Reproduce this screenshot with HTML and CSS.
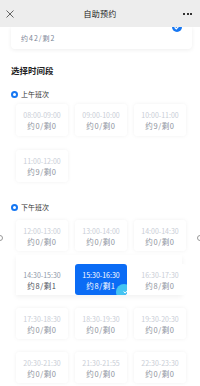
FILE: index.html
```html
<!DOCTYPE html>
<html lang="zh-CN">
<head>
<meta charset="utf-8">
<title>自助预约</title>
<link rel="stylesheet" href="styles.css">
</head>
<body>
<header class="nav">
  <svg class="nav-close" width="8" height="8" viewBox="0 0 8 8"><path d="M0.5 0.5L7.5 7.5M7.5 0.5L0.5 7.5" stroke="#555" stroke-width="0.9" fill="none"/></svg>
  <div class="nav-title">自助预约</div>
  <div class="nav-more"><i></i><i></i><i></i></div>
</header>

<main class="page">
  <div class="top-card">
    <span class="top-count">约42/剩2</span>
    <span class="top-check">
      <svg width="10" height="10" viewBox="0 0 10 10"><circle cx="5" cy="5" r="5" fill="#1677f2"/><path d="M2.6 5.2L4.3 6.8L7.4 3.6" stroke="#fff" stroke-width="1.2" fill="none"/></svg>
    </span>
  </div>

  <h2 class="section-title">选择时间段</h2>

  <div class="group-label"><span class="radio"></span>上午班次</div>
  <div class="grid morning">
    <div class="slot"><div class="time">08:00-09:00</div><div class="count">约0/剩0</div></div>
    <div class="slot"><div class="time">09:00-10:00</div><div class="count">约0/剩0</div></div>
    <div class="slot"><div class="time">10:00-11:00</div><div class="count">约9/剩0</div></div>
    <div class="slot"><div class="time">11:00-12:00</div><div class="count">约9/剩0</div></div>
  </div>

  <div class="group-label afternoon-label"><span class="radio"></span>下午班次</div>
  <div class="afternoon">
    <span class="edge edge-left"></span>
    <span class="edge edge-right"></span>
    <div class="grid">
      <div class="slot"><div class="time">12:00-13:00</div><div class="count">约0/剩0</div></div>
      <div class="slot"><div class="time">13:00-14:00</div><div class="count">约0/剩0</div></div>
      <div class="slot"><div class="time">14:00-14:30</div><div class="count">约0/剩0</div></div>
    </div>
    <div class="grid lifted">
      <div class="slot open"><div class="time">14:30-15:30</div><div class="count">约8/剩1</div></div>
      <div class="slot selected"><div class="time">15:30-16:30</div><div class="count">约8/剩1</div>
        <span class="corner"><svg width="6" height="5" viewBox="0 0 6 5"><path d="M0.6 2.6L2.2 4L5.4 0.8" stroke="#fff" stroke-width="1" fill="none"/></svg></span>
      </div>
      <div class="slot"><div class="time">16:30-17:30</div><div class="count">约8/剩0</div></div>
    </div>
    <div class="grid">
      <div class="slot"><div class="time">17:30-18:30</div><div class="count">约0/剩0</div></div>
      <div class="slot"><div class="time">18:30-19:30</div><div class="count">约0/剩0</div></div>
      <div class="slot"><div class="time">19:30-20:30</div><div class="count">约0/剩0</div></div>
    </div>
    <div class="grid">
      <div class="slot"><div class="time">20:30-21:30</div><div class="count">约0/剩0</div></div>
      <div class="slot"><div class="time">21:30-21:55</div><div class="count">约0/剩0</div></div>
      <div class="slot"><div class="time">22:30-23:30</div><div class="count">约0/剩0</div></div>
    </div>
  </div>
</main>
</body>
</html>
```

FILE: styles.css
```css
* { box-sizing: border-box; }
html, body { margin: 0; padding: 0; }
body {
  width: 200px;
  height: 386px;
  overflow: hidden;
  background: #fff;
  font-family: "Noto Sans CJK SC", "Noto Sans", sans-serif;
  color: #333;
}

.nav {
  position: relative;
  z-index: 2;
  height: 27px;
  background: #ededed;
  display: flex;
  align-items: center;
  justify-content: space-between;
  padding: 0 8px 0 6px;
}
.nav-close { display: block; margin-top: 1px; }
.nav-title {
  position: absolute;
  left: 0; right: 0; top: 0;
  text-align: center;
  line-height: 27px;
  font-size: 8px;
  color: #222;
  letter-spacing: 0.2px;
  pointer-events: none;
}
.nav-more { display: flex; gap: 1.3px; margin-top: 1px; }
.nav-more i { width: 2px; height: 2px; background: #333; display: block; }

.page { padding: 0; }

.top-card {
  position: relative;
  margin: 0 8px 0 11px;
  height: 22px;
  background: #fff;
  border-radius: 0 0 4px 4px;
  box-shadow: 0 1px 4px rgba(0, 0, 0, 0.07);
  display: flex;
  align-items: center;
  padding: 0 0 1px 10px;
}
.top-count {
  font-size: 7px;
  color: #7b8496;
  letter-spacing: 1px;
}
.top-check {
  position: absolute;
  right: 10px;
  top: -5px;
  display: block;
  line-height: 0;
}

.section-title {
  margin: 15px 0 0 11px;
  font-size: 8.5px;
  line-height: 12px;
  font-weight: 700;
  color: #222;
}

.group-label {
  display: flex;
  align-items: center;
  margin: 13px 0 0 11px;
  font-size: 7px;
  line-height: 10px;
  color: #333;
}
.radio {
  width: 7px;
  height: 7px;
  border: 2px solid #1677f2;
  border-radius: 50%;
  margin-right: 3px;
}

.grid {
  display: grid;
  grid-template-columns: repeat(3, 52px);
  column-gap: 7px;
  row-gap: 14px;
  padding-left: 16px;
  margin-top: 5px;
}

.slot {
  position: relative;
  height: 32px;
  background: #fff;
  border-radius: 3px;
  box-shadow: 0 0 4px rgba(0, 0, 0, 0.06);
  text-align: center;
  padding-top: 6px;
  overflow: hidden;
}
.time {
  font-size: 7px;
  line-height: 10px;
  color: #c9cdd6;
}
.count {
  font-size: 7.5px;
  line-height: 11px;
  color: #8e939d;
  letter-spacing: 0.6px;
}
.slot.open .time { color: #8f98a8; }
.slot.open .count { color: #4a4f58; }
.slot.selected { background: #0b6cf5; box-shadow: none; }
.slot.selected .time,
.slot.selected .count { color: #fff; }
.corner {
  position: absolute;
  right: -5px;
  bottom: -5px;
  width: 16px;
  height: 16px;
  border-radius: 50%;
  background: #44c4f2;
  padding: 3px 0 0 3px;
  line-height: 0;
}

.afternoon-label { margin-top: 20px; }

.afternoon {
  position: relative;
  display: flex;
  flex-direction: column;
  gap: 13px;
  margin-top: 8px;
}
.afternoon .grid { margin-top: 0; }
.afternoon .slot { height: 31px; }

.grid.lifted { position: relative; }
.grid.lifted::before {
  content: "";
  position: absolute;
  left: 16px;
  width: 166px;
  top: -9px;
  bottom: 0;
  background: #fff;
  box-shadow: 0 2px 5px rgba(0, 0, 0, 0.06);
}
.grid.lifted .slot { box-shadow: none; }

.edge {
  position: absolute;
  top: 15px;
  width: 6px;
  height: 6px;
  border: 0.8px solid #999;
  border-radius: 50%;
}
.edge-left { left: -3px; }
.edge-right { right: -3px; }
```
